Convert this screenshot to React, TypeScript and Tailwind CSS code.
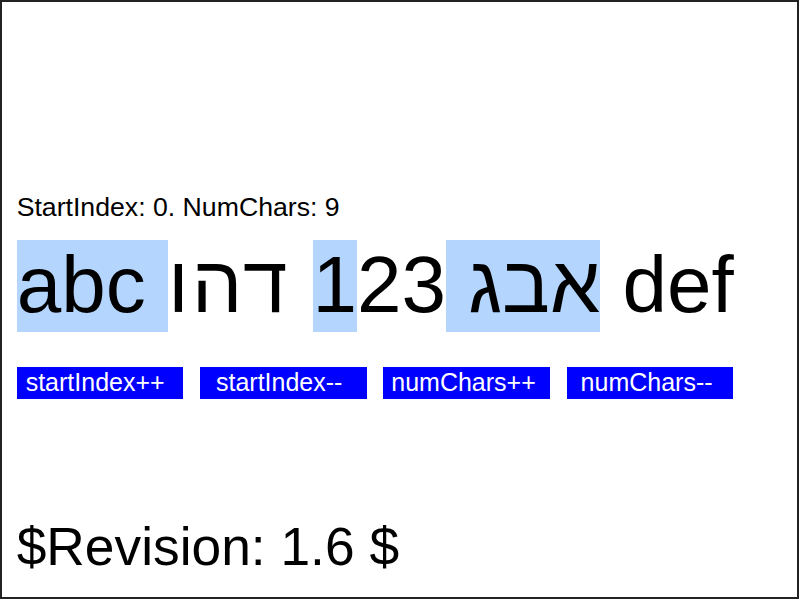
const buttons = [
  { label: "startIndex++", pad: "pl-[9px]" },
  { label: "startIndex--", pad: "pl-[16px]" },
  { label: "numChars++", pad: "pl-[8px]" },
  { label: "numChars--", pad: "pl-[14px]" },
];

const App = () => {
  return (
    <div
      className="w-[799px] h-[599px] border-2 border-[#222] bg-white flex flex-col pl-[14.67px] pt-[192px] text-black"
      style={{ fontFamily: '"Liberation Sans", Arial, "DejaVu Sans", sans-serif' }}
    >
      <div className="text-[26.67px] leading-none">StartIndex: 0. NumChars: 9</div>
      <div className="mt-[24.6px] text-[80px] leading-none whitespace-pre" dir="ltr">
        <span className="bg-[#b4d6fe] pb-[3px]">abc אבג 1</span>23 <span className="tracking-[3px]">דהו</span> def
      </div>
      <div className="mt-[41.4px] flex gap-[16.67px]">
        {buttons.map((b) => (
          <div
            key={b.label}
            className={`w-[166.67px] h-[32.67px] bg-[#0000ff] text-white text-[25px] leading-none flex items-center ${b.pad}`}
          >
            {b.label}
          </div>
        ))}
      </div>
      <div className="mt-[120.7px] text-[53.33px] leading-none">$Revision: 1.6 $</div>
    </div>
  );
};

export default App;
